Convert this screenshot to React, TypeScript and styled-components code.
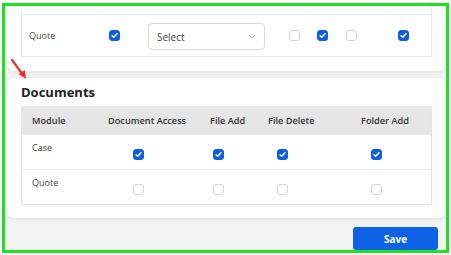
import React from 'react'
import styled, { createGlobalStyle } from 'styled-components'

const GlobalStyle = createGlobalStyle`
  html, body {
    margin: 0;
    padding: 0;
    background: #ffffff;
    font-family: 'Open Sans', 'Noto Sans', sans-serif;
  }
  * {
    box-sizing: border-box;
  }
`

const Frame = styled.div`
  position: relative;
  width: 447px;
  height: 250px;
  margin: 3px 0 0 2px;
  border: 3px solid #1fe21f;
  background: #f3f3f3;
  overflow: hidden;
  display: flex;
  flex-direction: column;
`

const Card = styled.div<{ $top?: number }>`
  margin: ${(p) => p.$top ?? 7}px 1px 0 2px;
  background: #fff;
  border-radius: 7px;
  box-shadow: 0 1px 4px rgba(0, 0, 0, 0.08);
  padding: 5px 13px 13px 14px;
  flex-shrink: 0;
`

const TopCard = styled(Card)`
  padding: 14px 13px 14px 14px;
`

const Title = styled.h3`
  margin: 0 0 5px;
  font-size: 13px;
  line-height: 18px;
  font-weight: 700;
  color: #222;
`

const Table = styled.div`
  border: 1px solid #e4e4e4;
  border-top: none;
`

const TopTable = styled.div`
  border: 1px solid #e9e9e9;
`

const Row = styled.div<{ $cols: string; $h: number; $head?: boolean; $first?: boolean }>`
  display: grid;
  grid-template-columns: ${(p) => p.$cols};
  height: ${(p) => p.$h}px;
  background: ${(p) => (p.$head ? '#e6e6e6' : '#fff')};
  border-top: ${(p) => (p.$first ? 'none' : '1px solid #e9e9e9')};
`

const HeadCell = styled.div`
  display: flex;
  align-items: center;
  padding-left: 10px;
  font-size: 9.2px;
  font-weight: 600;
  color: #333;
  white-space: nowrap;
`

const TextCell = styled.div<{ $pad: number; $center?: boolean }>`
  display: flex;
  align-items: ${(p) => (p.$center ? 'center' : 'flex-start')};
  padding: ${(p) => (p.$center ? '0' : '6px')} 0 0 ${(p) => p.$pad}px;
  font-size: 9px;
  line-height: 13px;
  color: #444;
`

const BoxCell = styled.div<{ $pad: number; $top?: number }>`
  display: flex;
  align-items: ${(p) => (p.$top != null ? 'flex-start' : 'center')};
  padding-left: ${(p) => p.$pad}px;
  padding-top: ${(p) => p.$top ?? 0}px;
`

const Box = styled.span<{ $on: boolean }>`
  width: 11px;
  height: 11px;
  border-radius: 3px;
  display: inline-flex;
  align-items: center;
  justify-content: center;
  background: ${(p) => (p.$on ? '#0d5fe0' : '#fff')};
  border: 1px solid ${(p) => (p.$on ? '#0d5fe0' : '#d4d4d4')};
`

const SelectBox = styled.div<{ $w: number; $ml: number; $end?: boolean }>`
  width: ${(p) => p.$w}px;
  height: 27px;
  margin-left: ${(p) => p.$ml}px;
  margin-top: ${(p) => (p.$end ? 0 : 2)}px;
  align-self: ${(p) => (p.$end ? 'end' : 'center')};
  margin-bottom: ${(p) => (p.$end ? 8 : 0)}px;
  border: 1px solid #dadada;
  border-radius: 4px;
  display: flex;
  align-items: center;
  justify-content: space-between;
  padding: 0 8px 0 8px;
  font-size: 10px;
  color: #444;
  background: #fff;
`

const Footer = styled.div`
  display: flex;
  justify-content: flex-end;
  padding: 9px 8px 0 0;
`

const SaveButton = styled.button`
  width: 85px;
  height: 23px;
  border: none;
  border-radius: 3px;
  background: #0d62e6;
  color: #fff;
  font-family: 'Open Sans', sans-serif;
  font-size: 10px;
  font-weight: 700;
  padding: 0;
`

const Arrow = styled.svg`
  position: absolute;
  left: 4px;
  top: 51px;
`

const Check = ({ on }: { on: boolean }) => (
  <Box $on={on}>
    {on && (
      <svg width="9" height="9" viewBox="0 0 9 9">
        <path d="M2 4.8 L3.7 6.3 L7 2.8" fill="none" stroke="#fff" strokeWidth="1.5" strokeLinecap="round" strokeLinejoin="round" />
      </svg>
    )}
  </Box>
)

const Chevron = () => (
  <svg width="8" height="5" viewBox="0 0 8 5">
    <path d="M0.8 0.8 L4 4 L7.2 0.8" fill="none" stroke="#a8a8a8" strokeWidth="1" />
  </svg>
)

const topCols = '78px 30px 153px 24px 30px 30px 1fr'
const docCols = '76px 102px 58px 93px 1fr'
const docHeads = ['Module', 'Document Access', 'File Add', 'File Delete', 'Folder Add']
const docOffsets = [35, 13, 19, 20]
const docRows = [
  { name: 'Case', boxes: [true, true, true, true] },
  { name: 'Quote', boxes: [false, false, false, false] },
]

export default function App() {
  return (
    <>
      <GlobalStyle />
      <Frame>
        <TopCard $top={-49}>
          <TopTable>
            <Row $cols={topCols} $h={42} $first>
              <TextCell $pad={7} $center />
              <BoxCell $pad={0} />
              <SelectBox $w={97} $ml={15} $end />
            </Row>
            <Row $cols={topCols} $h={42}>
              <TextCell $pad={7} $center>Quote</TextCell>
              <BoxCell $pad={9}><Check on /></BoxCell>
              <BoxCell $pad={18}>
                <SelectBox $w={117} $ml={0}>
                  Select
                  <Chevron />
                </SelectBox>
              </BoxCell>
              <BoxCell $pad={6}><Check on={false} /></BoxCell>
              <BoxCell $pad={10}><Check on /></BoxCell>
              <BoxCell $pad={9}><Check on={false} /></BoxCell>
              <BoxCell $pad={31}><Check on /></BoxCell>
            </Row>
          </TopTable>
        </TopCard>

        <Card>
          <Title>Documents</Title>
          <Table>
            <Row $cols={docCols} $h={28} $head $first>
              {docHeads.map((h) => (
                <HeadCell key={h}>{h}</HeadCell>
              ))}
            </Row>
            {docRows.map((r) => (
              <Row key={r.name} $cols={docCols} $h={35}>
                <TextCell $pad={10}>{r.name}</TextCell>
                {r.boxes.map((on, i) => (
                  <BoxCell key={i} $pad={docOffsets[i]} $top={14}>
                    <Check on={on} />
                  </BoxCell>
                ))}
              </Row>
            ))}
          </Table>
        </Card>

        <Footer>
          <SaveButton>Save</SaveButton>
        </Footer>

        <Arrow width="24" height="26" viewBox="0 0 24 26">
          <line x1="3" y1="3" x2="13" y2="16.5" stroke="#e8312f" strokeWidth="2.2" strokeLinecap="round" />
          <path d="M9.5 17 L17 22 L15.8 13 Z" fill="#e8312f" />
        </Arrow>
      </Frame>
    </>
  )
}
